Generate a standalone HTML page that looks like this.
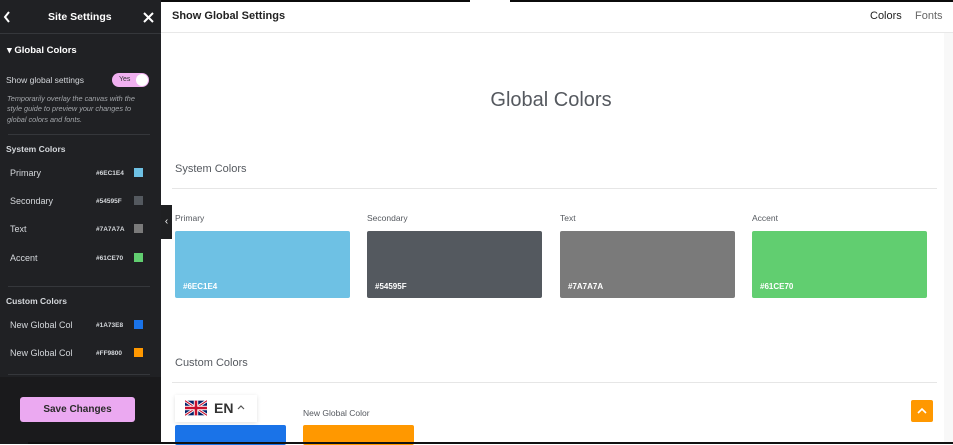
<!DOCTYPE html>
<html><head><meta charset="utf-8"><style>
*{margin:0;padding:0;box-sizing:border-box}
body{width:953px;height:444px;overflow:hidden;background:#fff;font-family:"Liberation Sans",sans-serif;position:relative}
.a{position:absolute}
#sb{left:0;top:0;width:161px;height:444px;background:#202124;color:#e6e8ea}
.t{font-size:9px;color:#d5d8dc}
.hx{font-size:6.5px;color:#d5d8dc;font-weight:bold}
.sq{width:9px;height:9px}
.ln{height:1px;background:#35373b}
.lbl{font-size:8.5px;color:#55595f}
.hex{font-size:8px;color:#fff;font-weight:bold}
</style></head><body>
<div class="a" style="left:0;top:0;width:470px;height:2px;background:#0b0b0b"></div>
<div class="a" style="left:510px;top:0;width:443px;height:2px;background:#0b0b0b"></div>
<div id="sb" class="a">
 <svg class="a" style="left:3px;top:11px" width="8" height="12" viewBox="0 0 8 12"><path d="M6 1L2 6L6 11" stroke="#fff" fill="none" stroke-width="2"/></svg>
 <div class="a" style="left:48px;top:11px;font-size:10.5px;font-weight:bold;color:#fff">Site Settings</div>
 <svg class="a" style="left:143px;top:12px" width="11" height="11" viewBox="0 0 11 11"><path d="M1 1L10 10M10 1L1 10" stroke="#fff" stroke-width="2"/></svg>
 <div class="a ln" style="left:0;top:33px;width:161px"></div>
 <div class="a" style="left:7px;top:45px;font-size:9.5px;font-weight:bold;color:#fff">&#9662; Global Colors</div>
 <div class="a t" style="left:6px;top:75px;font-size:8.5px">Show global settings</div>
 <div class="a" style="left:112px;top:73px;width:37px;height:14px;border-radius:7px;background:#f0b0f0"></div>
 <div class="a" style="left:119px;top:76px;font-size:7px;color:#333">Yes</div>
 <div class="a" style="left:136px;top:74px;width:12px;height:12px;border-radius:6px;background:#fff"></div>
 <div class="a" style="left:7px;top:94px;width:140px;font-size:7.3px;font-style:italic;color:#a4a7ab;line-height:10.3px">Temporarily overlay the canvas with the style guide to preview your changes to global colors and fonts.</div>
 <div class="a ln" style="left:8px;top:134px;width:142px"></div>
 <div class="a" style="left:6px;top:144px;font-size:8.5px;font-weight:bold;color:#d5d8dc">System Colors</div>
 <div class="a t" style="left:10px;top:168px">Primary</div><div class="a hx" style="left:96px;top:170px">#6EC1E4</div><div class="a sq" style="left:134px;top:168px;background:#6ec1e4"></div>
 <div class="a t" style="left:10px;top:196px">Secondary</div><div class="a hx" style="left:96px;top:198px">#54595F</div><div class="a sq" style="left:134px;top:196px;background:#54595f"></div>
 <div class="a t" style="left:10px;top:224px">Text</div><div class="a hx" style="left:96px;top:226px">#7A7A7A</div><div class="a sq" style="left:134px;top:224px;background:#7a7a7a"></div>
 <div class="a t" style="left:10px;top:253px">Accent</div><div class="a hx" style="left:96px;top:255px">#61CE70</div><div class="a sq" style="left:134px;top:253px;background:#61ce70"></div>
 <div class="a ln" style="left:8px;top:286px;width:142px"></div>
 <div class="a" style="left:6px;top:296px;font-size:8.5px;font-weight:bold;color:#d5d8dc">Custom Colors</div>
 <div class="a t" style="left:10px;top:320px">New Global Col</div><div class="a hx" style="left:96px;top:322px">#1A73E8</div><div class="a sq" style="left:134px;top:320px;background:#1a73e8"></div>
 <div class="a t" style="left:10px;top:348px">New Global Col</div><div class="a hx" style="left:96px;top:350px">#FF9800</div><div class="a sq" style="left:134px;top:348px;background:#ff9800"></div>
 <div class="a ln" style="left:8px;top:374px;width:142px"></div>
 <div class="a" style="left:0;top:377px;width:161px;height:67px;background:#1a1a1c"></div>
 <div class="a" style="left:20px;top:397px;width:115px;height:25px;border-radius:3px;background:#eba9f1;font-size:10px;color:#2a2a2a;text-align:center;line-height:25px;font-weight:bold">Save Changes</div>
</div>
<div class="a" style="left:161px;top:205px;width:11px;height:34px;background:#1f2022;color:#fff;font-size:10px;text-align:center;line-height:34px">&#8249;</div>
<div class="a" style="left:172px;top:10px;font-size:11px;font-weight:bold;color:#222">Show Global Settings</div>
<div class="a" style="left:870px;top:10px;font-size:11px;color:#222">Colors</div>
<div class="a" style="left:915px;top:10px;font-size:11px;color:#666">Fonts</div>
<div class="a" style="left:161px;top:32px;width:792px;height:1px;background:#e8e8e8"></div>
<div class="a" style="left:944px;top:33px;width:9px;height:409px;background:#f8f8f8"></div>
<div class="a" style="left:161px;top:89px;width:780px;text-align:center;font-size:20px;color:#55595f">Global Colors</div>
<div class="a" style="left:175px;top:163px;font-size:11px;color:#55595f">System Colors</div>
<div class="a" style="left:172px;top:188px;width:765px;height:1px;background:#e6e6e6"></div>
<div class="a lbl" style="left:175px;top:213px">Primary</div>
<div class="a lbl" style="left:367px;top:213px">Secondary</div>
<div class="a lbl" style="left:560px;top:213px">Text</div>
<div class="a lbl" style="left:752px;top:213px">Accent</div>
<div class="a" style="left:175px;top:231px;width:175px;height:67px;background:#6ec1e4;border-radius:2px"><span class="a hex" style="left:8px;top:51px">#6EC1E4</span></div>
<div class="a" style="left:367px;top:231px;width:175px;height:67px;background:#54595f;border-radius:2px"><span class="a hex" style="left:8px;top:51px">#54595F</span></div>
<div class="a" style="left:560px;top:231px;width:175px;height:67px;background:#7a7a7a;border-radius:2px"><span class="a hex" style="left:8px;top:51px">#7A7A7A</span></div>
<div class="a" style="left:752px;top:231px;width:175px;height:67px;background:#61ce70;border-radius:2px"><span class="a hex" style="left:8px;top:51px">#61CE70</span></div>
<div class="a" style="left:175px;top:357px;font-size:11px;color:#55595f">Custom Colors</div>
<div class="a" style="left:172px;top:382px;width:765px;height:1px;background:#e6e6e6"></div>
<div class="a lbl" style="left:303px;top:408px">New Global Color</div>
<div class="a" style="left:175px;top:425px;width:111px;height:20px;background:#1a73e8;border-radius:2px"></div>
<div class="a" style="left:303px;top:425px;width:111px;height:20px;background:#ff9800;border-radius:2px"></div>
<div class="a" style="left:175px;top:395px;width:82px;height:27px;background:#fff;box-shadow:0 1px 4px rgba(0,0,0,.12)"></div>
<svg class="a" style="left:185px;top:400px" width="22" height="16" viewBox="0 0 60 40"><rect width="60" height="40" fill="#012169"/><path d="M0 0L60 40M60 0L0 40" stroke="#fff" stroke-width="8"/><path d="M0 0L60 40M60 0L0 40" stroke="#c8102e" stroke-width="3"/><path d="M30 0V40M0 20H60" stroke="#fff" stroke-width="12"/><path d="M30 0V40M0 20H60" stroke="#c8102e" stroke-width="7"/></svg>
<div class="a" style="left:214px;top:400px;font-size:14px;font-weight:bold;color:#333">EN</div>
<svg class="a" style="left:237px;top:404px" width="8" height="6" viewBox="0 0 8 6"><path d="M1 5L4 2L7 5" stroke="#555" fill="none" stroke-width="1.2"/></svg>
<div class="a" style="left:911px;top:400px;width:22px;height:22px;background:#ff9800;border-radius:2px"></div>
<svg class="a" style="left:917px;top:407px" width="10" height="7" viewBox="0 0 10 7"><path d="M1 6L5 2L9 6" stroke="#fff" fill="none" stroke-width="1.6"/></svg>
<div class="a" style="left:28px;top:442px;width:925px;height:2px;background:#111"></div>
</body></html>
